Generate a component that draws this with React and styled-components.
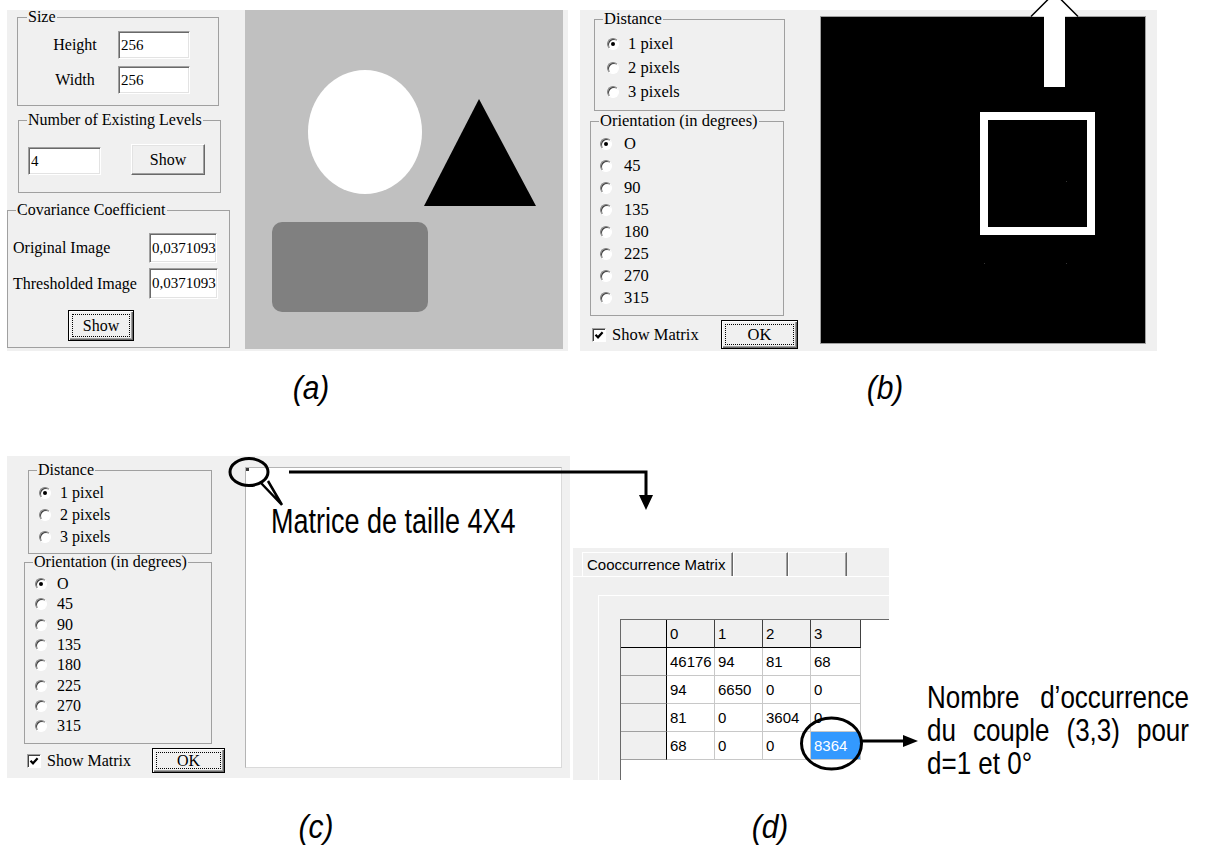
import React from "react";
import styled, { createGlobalStyle, css } from "styled-components";

const GlobalStyle = createGlobalStyle`
  html, body {
    margin: 0;
    padding: 0;
    background: #fff;
  }
  body {
    font-family: "Liberation Serif", "Times New Roman", serif;
    color: #000;
  }
`;

const Figure = styled.div`
  position: relative;
  width: 1208px;
  height: 848px;
  overflow: hidden;
  background: #fff;
`;

const Row = styled.div`
  display: flex;
  align-items: flex-start;
  margin-top: ${(p) => p.$top}px;
  padding-left: 7px;
`;

const Dialog = styled.div`
  display: flex;
  flex: none;
  box-sizing: border-box;
  width: ${(p) => p.$w}px;
  height: ${(p) => p.$h}px;
  margin: ${(p) => p.$m || 0};
  background: #f0f0f0;
  font-size: ${(p) => p.$fs}px;
`;

const Column = styled.div`
  display: flex;
  flex-direction: column;
  align-items: flex-start;
  flex: none;
  width: ${(p) => p.$w}px;
`;

const GroupBox = styled.fieldset`
  box-sizing: border-box;
  width: ${(p) => p.$w}px;
  height: ${(p) => p.$h}px;
  margin: ${(p) => p.$m};
  padding: 0;
  min-inline-size: 0;
  border: 1px solid #a0a0a0;
`;

const Legend = styled.legend`
  margin-left: ${(p) => p.$ml ?? 8}px;
  padding: 0 1px;
  line-height: 14px;
  white-space: nowrap;
`;

const GroupBody = styled.div`
  padding: ${(p) => p.$pad};
`;

const FieldGrid = styled.div`
  display: grid;
  grid-template-columns: ${(p) => p.$cols};
  row-gap: ${(p) => p.$gap}px;
  align-items: center;
`;

const FieldLabel = styled.span`
  padding-left: ${(p) => p.$indent || 0}px;
  text-align: ${(p) => p.$align || "left"};
  white-space: nowrap;
`;

const TextBox = styled.div`
  box-sizing: border-box;
  display: flex;
  align-items: center;
  width: ${(p) => p.$w}px;
  height: ${(p) => p.$h}px;
  padding: 0 2px;
  background: #fff;
  font-size: 15px;
  border: 1px solid;
  border-color: #a0a0a0 #fff #fff #a0a0a0;
  box-shadow: inset 1px 1px 0 #696969, inset -1px -1px 0 #e3e3e3;
`;

const InlineRow = styled.div`
  display: flex;
  align-items: flex-end;
  gap: ${(p) => p.$gap}px;
`;

const Button = styled.button`
  box-sizing: border-box;
  display: flex;
  align-items: center;
  justify-content: center;
  width: ${(p) => p.$w}px;
  height: ${(p) => p.$h}px;
  margin: ${(p) => p.$m || 0};
  padding: 0;
  font: inherit;
  color: #000;
  background: #f0f0f0;
  border: 1px solid;
  border-color: #fff #696969 #696969 #fff;
  box-shadow: inset -1px -1px 0 #a0a0a0, inset 1px 1px 0 #e3e3e3;
  ${(p) =>
    p.$default &&
    css`
      padding: 3px;
      border-color: #000;
      box-shadow: inset 1px 1px 0 #fff, inset -1px -1px 0 #696969,
        inset -2px -2px 0 #a0a0a0;
    `}
`;

const FocusRing = styled.span`
  flex: 1;
  align-self: stretch;
  display: flex;
  align-items: center;
  justify-content: center;
  border: 1px dotted #000;
`;

const Picture = styled.div`
  flex: none;
  box-sizing: border-box;
  width: ${(p) => p.$w}px;
  height: ${(p) => p.$h}px;
  margin: ${(p) => p.$m || 0};
  background: ${(p) => p.$bg};
  border: ${(p) => p.$border || "none"};
  svg {
    display: block;
  }
`;

const RadioRow = styled.div`
  display: flex;
  align-items: center;
  gap: ${(p) => p.$gap}px;
  height: ${(p) => p.$h}px;
  white-space: nowrap;
`;

const RadioMark = styled.span`
  box-sizing: border-box;
  flex: none;
  display: flex;
  align-items: center;
  justify-content: center;
  width: 12px;
  height: 12px;
  border-radius: 50%;
  background: #fff;
  border: 1px solid;
  border-color: #808080 #fff #fff #808080;
  box-shadow: inset 1px 1px 0 #404040;
  &::after {
    content: "";
    width: 4px;
    height: 4px;
    border-radius: 50%;
    background: ${(p) => (p.$checked ? "#000" : "transparent")};
  }
`;

const Footer = styled.div`
  display: flex;
  align-items: center;
  justify-content: space-between;
  width: ${(p) => p.$w}px;
  margin: ${(p) => p.$m};
`;

const CheckLabel = styled.span`
  display: flex;
  align-items: center;
  gap: 6px;
  white-space: nowrap;
`;

const CheckBox = styled.span`
  box-sizing: border-box;
  display: flex;
  align-items: center;
  justify-content: center;
  width: 14px;
  height: 14px;
  background: #fff;
  border: 1px solid;
  border-color: #a0a0a0 #fff #fff #a0a0a0;
  box-shadow: inset 1px 1px 0 #404040;
`;

const MatrixView = styled.div`
  flex: none;
  box-sizing: border-box;
  width: 317px;
  height: 301px;
  margin-top: 11px;
  background: #fff;
  border: 1px solid #dadada;
  border-top-color: #b4b4b4;
  border-left-color: #b4b4b4;
`;

const MatrixDot = styled.div`
  width: 3px;
  height: 3px;
  background: #3a3a3a;
`;

/* tabbed window of panel (d) */
const TabDialog = styled.div`
  display: flex;
  flex-direction: column;
  flex: none;
  width: 316px;
  height: 232px;
  margin: 92px 0 0 3px;
  background: #f0f0f0;
  font-family: "Liberation Sans", Arial, sans-serif;
  font-size: 15px;
  overflow: hidden;
`;

const TabStrip = styled.div`
  box-sizing: border-box;
  display: flex;
  align-items: flex-end;
  height: 29px;
  padding-left: 9px;
  border-bottom: 1px solid #fff;
`;

const Tab = styled.div`
  box-sizing: border-box;
  display: flex;
  align-items: center;
  width: ${(p) => p.$w}px;
  height: 24px;
  padding-left: 4px;
  border-top: 1px solid #fff;
  border-left: 1px solid #fff;
  border-right: 1px solid #696969;
  box-shadow: inset -1px 0 0 #a0a0a0;
  white-space: nowrap;
`;

const TabBody = styled.div`
  flex: 1;
  display: flex;
  padding: 18px 0 0 25px;
`;

const InnerFrame = styled.div`
  flex: 1;
  display: flex;
  padding: 23px 0 0 21px;
  border-top: 1px solid #fff;
  border-left: 1px solid #fff;
`;

const GridControl = styled.div`
  flex: 1;
  background: #fff;
  border-top: 1px solid #696969;
  border-left: 1px solid #696969;
`;

const MatrixGrid = styled.div`
  display: grid;
  grid-template-columns: 46px 48px 48px 48px 50px;
  grid-auto-rows: 28px;
  width: max-content;
`;

const cellKinds = {
  corner: css`
    background: #f0f0f0;
    border-right: 1px solid #000;
    border-bottom: 1px solid #000;
  `,
  colHead: css`
    background: #f0f0f0;
    border-right: 1px solid #404040;
    border-bottom: 1px solid #000;
  `,
  rowHead: css`
    background: #f0f0f0;
    border-right: 1px solid #000;
    border-bottom: 1px solid #a0a0a0;
  `,
  data: css`
    background: #fff;
    border-right: 1px solid #c8c8c8;
    border-bottom: 1px solid #c8c8c8;
  `,
  selected: css`
    background: #3399ff;
    color: #fff;
    border-right: 1px solid #c8c8c8;
    border-bottom: 1px solid #c8c8c8;
  `,
};

const MatrixCell = styled.div`
  box-sizing: border-box;
  display: flex;
  align-items: center;
  padding-left: 3px;
  white-space: nowrap;
  ${(p) => cellKinds[p.$kind]}
`;

const Note = styled.div`
  flex: none;
  width: 262px;
  margin: 225px 0 0 38px;
  font-family: "Liberation Sans", Arial, sans-serif;
  font-size: 26px;
  line-height: 28px;
  transform: scaleY(1.18);
  transform-origin: top left;
`;

const NoteLine = styled.div`
  display: flex;
  justify-content: ${(p) => (p.$justify ? "space-between" : "flex-start")};
  white-space: pre;
`;

const CaptionRow = styled.div`
  display: flex;
  height: 34px;
  margin-top: ${(p) => p.$top}px;
`;

const Caption = styled.div`
  flex: none;
  width: 60px;
  margin-left: ${(p) => p.$offset}px;
  text-align: center;
  font-family: "Liberation Sans", Arial, sans-serif;
  font-style: italic;
  font-size: 30px;
  line-height: 34px;
  transform: scaleY(1.12);
`;

const Callout = styled.div`
  position: absolute;
  left: 271px;
  top: 504px;
  font-family: "Liberation Sans", Arial, sans-serif;
  font-size: 27px;
  line-height: 27px;
  white-space: nowrap;
  transform: scaleY(1.33);
  transform-origin: top left;
`;

const Annotations = styled.svg`
  position: absolute;
  left: 0;
  top: 0;
  width: 1208px;
  height: 848px;
  pointer-events: none;
  overflow: visible;
`;

const distances = ["1 pixel", "2 pixels", "3 pixels"];
const angles = ["O", "45", "90", "135", "180", "225", "270", "315"];

const layoutB = {
  distance: { m: "2px 0 0 14px", w: 191, h: 99, pad: "6px 0 0 12px", row: 24, gap: 9 },
  orient: { m: "3px 0 0 10px", w: 194, h: 202, pad: "5px 0 0 9px", row: 22, gap: 12 },
  footer: { m: "4px 0 0 12px", w: 206, btnW: 77, btnH: 29 },
};

const layoutC = {
  distance: { m: "7px 0 0 21px", w: 184, h: 91, pad: "5px 0 0 10px", row: 22, gap: 9 },
  orient: { m: "1px 0 0 17px", w: 188, h: 189, pad: "5px 0 0 10px", row: 20.3, gap: 10 },
  footer: { m: "4px 0 0 20px", w: 198, btnW: 73, btnH: 25 },
};

const matrix = [
  [46176, 94, 81, 68],
  [94, 6650, 0, 0],
  [81, 0, 3604, 0],
  [68, 0, 0, 8364],
];

const RadioGroup = ({ title, items, box }) => (
  <GroupBox $w={box.w} $h={box.h} $m={box.m}>
    <Legend>{title}</Legend>
    <GroupBody $pad={box.pad}>
      {items.map((item, i) => (
        <RadioRow key={item} $h={box.row} $gap={box.gap}>
          <RadioMark $checked={i === 0} />
          {item}
        </RadioRow>
      ))}
    </GroupBody>
  </GroupBox>
);

const CooccurrenceOptions = ({ layout }) => (
  <Column $w={layout.width}>
    <RadioGroup title="Distance" items={distances} box={layout.distance} />
    <RadioGroup title="Orientation (in degrees)" items={angles} box={layout.orient} />
    <Footer $w={layout.footer.w} $m={layout.footer.m}>
      <CheckLabel>
        <CheckBox>
          <svg width="10" height="10" viewBox="0 0 10 10">
            <path d="M1.5 4.8 L4 7.3 L8.6 2.2" fill="none" stroke="#000" strokeWidth="2.2" />
          </svg>
        </CheckBox>
        Show Matrix
      </CheckLabel>
      <Button $default $w={layout.footer.btnW} $h={layout.footer.btnH}>
        <FocusRing>OK</FocusRing>
      </Button>
    </Footer>
  </Column>
);

const SegmentationPanel = () => (
  <Dialog $w={561} $h={341} $fs={16}>
    <Column $w={238}>
      <GroupBox $w={202} $h={96} $m="0 0 0 10px">
        <Legend $ml={9}>Size</Legend>
        <GroupBody $pad="7px 0 0 0">
          <FieldGrid $cols="100px 72px" $gap={7}>
            <FieldLabel $indent={14} $align="center">Height</FieldLabel>
            <TextBox $w={72} $h={28}>256</TextBox>
            <FieldLabel $indent={14} $align="center">Width</FieldLabel>
            <TextBox $w={72} $h={28}>256</TextBox>
          </FieldGrid>
        </GroupBody>
      </GroupBox>
      <GroupBox $w={203} $h={80} $m="7px 0 0 11px">
        <Legend>Number of Existing Levels</Legend>
        <GroupBody $pad="17px 0 0 9px">
          <InlineRow $gap={30}>
            <TextBox $w={73} $h={28}>4</TextBox>
            <Button $w={74} $h={31}>Show</Button>
          </InlineRow>
        </GroupBody>
      </GroupBox>
      <GroupBox $w={223} $h={145} $m="10px 0 0 0">
        <Legend>Covariance Coefficient</Legend>
        <GroupBody $pad="16px 0 0 5px">
          <FieldGrid $cols="136px 69px" $gap={5}>
            <FieldLabel>Original Image</FieldLabel>
            <TextBox $w={68} $h={30}>0,0371093</TextBox>
            <FieldLabel>Thresholded Image</FieldLabel>
            <TextBox $w={69} $h={31}>0,0371093</TextBox>
          </FieldGrid>
          <Button $default $w={66} $h={31} $m="11px 0 0 55px">
            <FocusRing>Show</FocusRing>
          </Button>
        </GroupBody>
      </GroupBox>
    </Column>
    <Picture $w={318} $h={339} $bg="#c0c0c0">
      <svg width="318" height="339">
        <ellipse cx="120" cy="122" rx="57" ry="62" fill="#fff" />
        <polygon points="234,89 179,196 291,196" fill="#000" />
        <rect x="27" y="212" width="156" height="90" rx="10" fill="#808080" />
      </svg>
    </Picture>
  </Dialog>
);

const ThresholdPanel = () => (
  <Dialog $w={577} $h={341} $fs={16.5} $m="0 0 0 12px">
    <CooccurrenceOptions layout={{ ...layoutB, width: 240 }} />
    <Picture $w={326} $h={328} $m="6px 0 0 0" $bg="#000" $border="1px solid #a0a0a0">
      <svg width="324" height="326">
        <rect x="163" y="99" width="107" height="115" fill="none" stroke="#fff" strokeWidth="8" />
        <rect x="245" y="164" width="1" height="1" fill="#333" />
        <rect x="163" y="246" width="1" height="1" fill="#333" />
        <rect x="245" y="246" width="1" height="1" fill="#333" />
      </svg>
    </Picture>
  </Dialog>
);

const MatrixPanel = () => (
  <Dialog $w={563} $h={322} $fs={16}>
    <CooccurrenceOptions layout={{ ...layoutC, width: 238 }} />
    <MatrixView>
      <MatrixDot />
    </MatrixView>
  </Dialog>
);

const ResultPanel = () => (
  <TabDialog>
    <TabStrip>
      <Tab $w={151}>Cooccurrence Matrix</Tab>
      <Tab $w={55} />
      <Tab $w={59} />
    </TabStrip>
    <TabBody>
      <InnerFrame>
        <GridControl>
          <MatrixGrid>
            <MatrixCell $kind="corner" />
            {[0, 1, 2, 3].map((c) => (
              <MatrixCell key={c} $kind="colHead">{c}</MatrixCell>
            ))}
            {matrix.map((row, r) => (
              <React.Fragment key={r}>
                <MatrixCell $kind="rowHead" />
                {row.map((v, c) => (
                  <MatrixCell key={c} $kind={r === 3 && c === 3 ? "selected" : "data"}>
                    {v}
                  </MatrixCell>
                ))}
              </React.Fragment>
            ))}
          </MatrixGrid>
        </GridControl>
      </InnerFrame>
    </TabBody>
  </TabDialog>
);

export default function App() {
  return (
    <Figure>
      <GlobalStyle />
      <Row $top={10}>
        <SegmentationPanel />
        <ThresholdPanel />
      </Row>
      <CaptionRow $top={20}>
        <Caption $offset={281}>(a)</Caption>
        <Caption $offset={514}>(b)</Caption>
      </CaptionRow>
      <Row $top={51}>
        <MatrixPanel />
        <ResultPanel />
        <Note>
          <NoteLine $justify>
            <span>Nombre</span>
            <span>d’occurrence</span>
          </NoteLine>
          <NoteLine $justify>
            <span>du</span>
            <span>couple</span>
            <span>(3,3)</span>
            <span>pour</span>
          </NoteLine>
          <NoteLine>d=1 et 0°</NoteLine>
        </Note>
      </Row>
      <CaptionRow $top={30}>
        <Caption $offset={286}>(c)</Caption>
        <Caption $offset={394}>(d)</Caption>
      </CaptionRow>

      <Callout>Matrice de taille 4X4</Callout>

      <Annotations viewBox="0 0 1208 848">
        <polygon points="1031,16.5 1054.5,-7 1078,16.5" fill="#fff" />
        <polyline points="1031,16.5 1054.5,-7 1078,16.5" fill="none" stroke="#000" strokeWidth="1.5" />
        <rect x="1044" y="16" width="21" height="71" fill="#fff" />

        <ellipse cx="249" cy="472" rx="19" ry="13.5" fill="none" stroke="#000" strokeWidth="3" />
        <path d="M261 483 L282 505 M268 481 L282 505" fill="none" stroke="#000" strokeWidth="2.5" />

        <path d="M289 472 H646 V497" fill="none" stroke="#000" strokeWidth="3" />
        <polygon points="639,495 653,495 646,510" fill="#000" />

        <ellipse cx="831.5" cy="743.5" rx="30" ry="25.5" fill="none" stroke="#000" strokeWidth="3" />
        <path d="M862 741 H905" fill="none" stroke="#000" strokeWidth="3" />
        <polygon points="903,735 918,741 903,747" fill="#000" />
      </Annotations>
    </Figure>
  );
}
